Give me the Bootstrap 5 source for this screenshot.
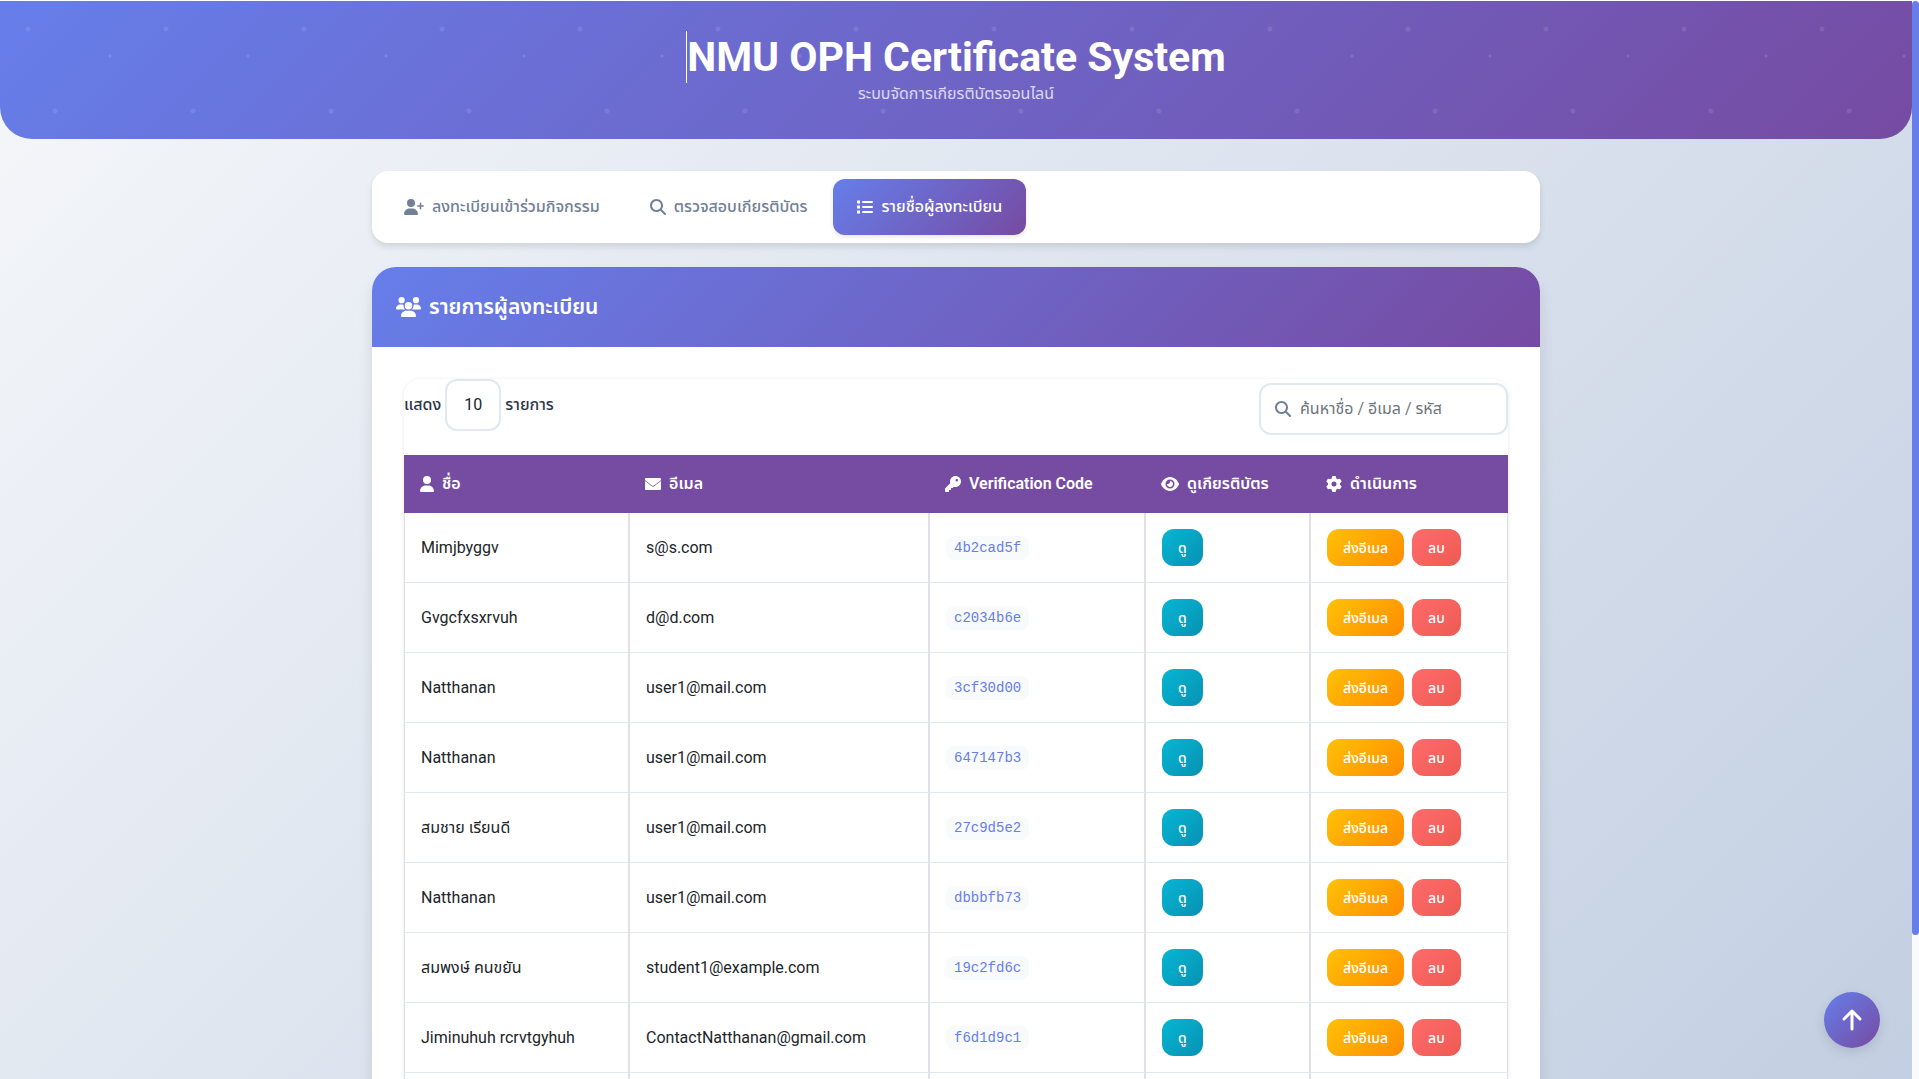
<!DOCTYPE html>
<html lang="th">
<head>
<meta charset="utf-8">
<meta name="viewport" content="width=device-width, initial-scale=1">
<title>NMU OPH Certificate System</title>
<link rel="stylesheet" href="https://cdn.jsdelivr.net/npm/bootstrap@5.3.0/dist/css/bootstrap.min.css">
<style>
:root{--brand-a:#667eea;--brand-b:#764ba2;--line:#e2e8f0;--muted:#718096;--grad:linear-gradient(135deg,var(--brand-a),var(--brand-b))}
html{height:100%;overflow:hidden}
body{height:100%;overflow:hidden;padding:1px 7px 0 0;color:#2d3748;font:16px/24px Roboto,"Noto Sans Thai","Noto Sans",sans-serif;background:#fff}
.page{height:100%;background:linear-gradient(135deg,#f5f7fa,#c3cfe2)}
.hero{height:138px;padding-top:30px;border-radius:0 0 32px 32px;color:#fff;
background:radial-gradient(circle at 28px 28px,#ffffff1a 2px,#fff0 3px) 0 0/138px 138px,
radial-gradient(circle at 110px 55px,#ffffff1f 1px,#fff0 2px) 0 0/138px 138px,
radial-gradient(circle at 55px 110px,#ffffff1a 2px,#fff0 3px) 0 0/138px 138px,var(--grad)}
.hero h1{font-size:41px;line-height:52px;font-weight:700;border-left:1px solid #fff}
.hero p{opacity:.75;line-height:22px}
.shell{max-width:1200px;padding:32px 16px 0}
.tabs{border-radius:16px;padding:8px;gap:2px;box-shadow:0 4px 6px #0000001a}
.tabs a{color:var(--muted);padding:16px 24px;border-radius:12px;font-weight:500;text-decoration:none}
.tabs a.active{color:#fff;background:var(--grad);box-shadow:0 2px 4px #0000001a}
.panel{margin-top:24px;border-radius:24px 24px 0 0;box-shadow:0 10px 15px #0000001a}
.panel-top{background:var(--grad);color:#fff;padding:24px;border-radius:24px 24px 0 0}
.panel-top h2{font-size:21px;line-height:32px;font-weight:600}
.panel-body{padding:32px 32px 0}
.listing{border-radius:16px 16px 0 0;box-shadow:0 1px 4px #0000001a}
.tools{height:76px}
.tools label{font-weight:500}
.tools select{appearance:none;width:56px;height:52px;border:2px solid var(--line);border-radius:12px;background:#fff;text-align:center;color:#212529}
.finder{width:249px;height:52px;margin-top:4px;border:2px solid var(--line);border-radius:12px;padding:0 14px;gap:9px}
.finder input{border:0;outline:0;padding:0;background:none;width:100%;color:#212529}
.finder input::placeholder{color:#6c757d}
.finder svg{color:var(--muted)}
.people{table-layout:fixed;width:100%;border-collapse:separate;border-spacing:0}
.people th{background:var(--brand-b);color:#fff;height:58px;padding:0 16px;font-weight:600}
.people td{height:70px;padding:0 16px;border:1px solid #dee2e6;border-top:0;border-bottom-color:var(--line);color:#212529}
.people code{font:14px/24px "Liberation Mono",monospace;color:var(--brand-a);background:#f8fafc;border-radius:8px;padding:0 8px;display:inline-block}
.act{border:0;border-radius:12px;height:37px;padding:0 16px;color:#fff;font-size:14px;font-weight:500}
.act-view{background:linear-gradient(135deg,#06b6d4,#0891b2)}
.act-mail{background:linear-gradient(135deg,#ffc107,#ff8c00)}
.act-del{background:linear-gradient(135deg,#ff6b6b,#ee5a52)}
.to-top{position:fixed;right:39px;bottom:31px;width:56px;height:56px;border:0;border-radius:50%;background:var(--grad);color:#fff;box-shadow:0 4px 12px #0000001f}
.track{position:fixed;top:0;right:0;bottom:0;width:7px;background:#f8fafc}
.track div{margin-top:1px;height:934px;border-radius:4px;background:var(--brand-a)}
svg{fill:currentColor;flex:none}
</style>
</head>
<body>
<div class="page">
<header class="hero d-flex flex-column align-items-center">
<h1 class="m-0">NMU OPH Certificate System</h1>
<p class="m-0">ระบบจัดการเกียรติบัตรออนไลน์</p>
</header>
<main class="shell container-fluid">
<nav class="tabs bg-white d-flex">
<a href="#" class="d-flex align-items-center gap-2"><svg width="20" height="16" viewBox="0 0 640 512"><path d="M96 128a128 128 0 1 1 256 0A128 128 0 1 1 96 128zM0 482.3C0 383.8 79.8 304 178.3 304h91.4C368.2 304 448 383.8 448 482.3c0 16.4-13.3 29.7-29.7 29.7H29.7C13.3 512 0 498.7 0 482.3zM504 312V248H440c-13.3 0-24-10.7-24-24s10.7-24 24-24h64V136c0-13.3 10.7-24 24-24s24 10.7 24 24v64h64c13.3 0 24 10.7 24 24s-10.7 24-24 24H552v64c0 13.3-10.7 24-24 24s-24-10.7-24-24z"/></svg>ลงทะเบียนเข้าร่วมกิจกรรม</a>
<a href="#" class="d-flex align-items-center gap-2"><svg width="16" height="16" viewBox="0 0 512 512"><path d="M416 208c0 45.9-14.9 88.3-40 122.7L502.6 457.4c12.5 12.5 12.5 32.8 0 45.3s-32.8 12.5-45.3 0L330.7 376c-34.4 25.2-76.8 40-122.7 40C93.1 416 0 322.9 0 208S93.1 0 208 0S416 93.1 416 208zM208 352a144 144 0 1 0 0-288 144 144 0 1 0 0 288z"/></svg>ตรวจสอบเกียรติบัตร</a>
<a href="#" class="active d-flex align-items-center gap-2"><svg width="16" height="16" viewBox="0 0 16 16"><path d="M0 1.5h3v3H0zM0 6.5h3v3H0zM0 11.5h3v3H0z"/><path d="M6 3h9M6 8h9M6 13h9" stroke="currentColor" stroke-width="2" stroke-linecap="round"/></svg>รายชื่อผู้ลงทะเบียน</a>
</nav>
<section class="panel bg-white">
<div class="panel-top"><h2 class="m-0 d-flex align-items-center gap-2"><svg width="25" height="20" viewBox="0 0 640 512"><path d="M144 0a80 80 0 1 1 0 160A80 80 0 1 1 144 0zM512 0a80 80 0 1 1 0 160A80 80 0 1 1 512 0zM0 298.7C0 239.8 47.8 192 106.7 192h42.7c15.9 0 31 3.5 44.6 9.7c-1.3 7.2-1.9 14.7-1.9 22.3c0 38.2 16.8 72.5 43.3 96H21.3C9.6 320 0 310.4 0 298.7zM405.3 320c26.6-23.5 43.3-57.8 43.3-96c0-7.6-.7-15-1.9-22.3c13.6-6.3 28.7-9.7 44.6-9.7h42.7C592.2 192 640 239.8 640 298.7c0 11.8-9.6 21.3-21.3 21.3H405.3zM224 224a96 96 0 1 1 192 0 96 96 0 1 1-192 0zM128 485.3C128 411.7 187.7 352 261.3 352H378.7C452.3 352 512 411.7 512 485.3c0 14.7-11.9 26.7-26.7 26.7H154.7c-14.7 0-26.7-11.9-26.7-26.7z"/></svg>รายการผู้ลงทะเบียน</h2></div>
<div class="panel-body"><div class="listing">
<div class="tools d-flex justify-content-between align-items-start">
<label class="d-flex align-items-center gap-1">แสดง <select><option>10</option></select> รายการ</label>
<label class="finder d-flex align-items-center bg-white"><svg width="16" height="16" viewBox="0 0 512 512"><path d="M416 208c0 45.9-14.9 88.3-40 122.7L502.6 457.4c12.5 12.5 12.5 32.8 0 45.3s-32.8 12.5-45.3 0L330.7 376c-34.4 25.2-76.8 40-122.7 40C93.1 416 0 322.9 0 208S93.1 0 208 0S416 93.1 416 208zM208 352a144 144 0 1 0 0-288 144 144 0 1 0 0 288z"/></svg><input type="search" placeholder="ค้นหาชื่อ / อีเมล / รหัส"></label>
</div>
<table class="people">
<colgroup><col style="width:225px"><col style="width:300px"><col style="width:216px"><col style="width:165px"><col style="width:198px"></colgroup>
<thead><tr>
<th><div class="d-flex align-items-center gap-2"><svg width="14" height="16" viewBox="0 0 448 512"><path d="M224 256A128 128 0 1 0 224 0a128 128 0 1 0 0 256zm-45.7 48C79.8 304 0 383.8 0 482.3C0 498.7 13.3 512 29.7 512H418.3c16.4 0 29.7-13.3 29.7-29.7C448 383.8 368.2 304 269.7 304H178.3z"/></svg>ชื่อ</div></th>
<th><div class="d-flex align-items-center gap-2"><svg width="16" height="16" viewBox="0 0 16 16"><rect y="2" width="16" height="12" rx="1"/><path d="M0 4.5 7 10q1 .7 2 0l7-5.5" fill="none" stroke="#764ba2" stroke-width=".8"/></svg>อีเมล</div></th>
<th><div class="d-flex align-items-center gap-2"><svg width="16" height="16" viewBox="0 0 512 512"><path d="M336 352c97.2 0 176-78.8 176-176S433.2 0 336 0S160 78.8 160 176c0 18.7 2.9 36.8 8.3 53.7L7 391c-4.5 4.5-7 10.6-7 17v80c0 13.3 10.7 24 24 24h80c13.3 0 24-10.7 24-24V448h40c13.3 0 24-10.7 24-24V384h40c6.4 0 12.5-2.5 17-7l33.3-33.3c16.9 5.4 35 8.3 53.7 8.3zM376 96a40 40 0 1 1 0 80 40 40 0 1 1 0-80z"/></svg>Verification Code</div></th>
<th><div class="d-flex align-items-center gap-2"><svg width="18" height="16" viewBox="0 0 576 512"><path d="M288 32c-80.8 0-145.5 36.8-192.6 80.6C48.6 156 17.3 208 2.5 243.7c-3.3 7.9-3.3 16.7 0 24.6C17.3 304 48.6 356 95.4 399.4C142.5 443.2 207.2 480 288 480s145.5-36.8 192.6-80.6c46.8-43.5 78.1-95.4 93-131.1c3.3-7.9 3.3-16.7 0-24.6c-14.9-35.7-46.2-87.7-93-131.1C433.5 68.8 368.8 32 288 32zM144 256a144 144 0 1 1 288 0 144 144 0 1 1-288 0zm144-64c0 35.3-28.7 64-64 64c-7.1 0-13.9-1.2-20.3-3.3c-5.5-1.8-11.9 1.6-11.7 7.4c.3 6.9 1.3 13.8 3.2 20.7c13.7 51.2 66.4 81.6 117.6 67.9s81.6-66.4 67.9-117.6c-11.1-41.5-47.8-69.4-88.6-71.1c-5.8-.2-9.2 6.1-7.4 11.7c2.1 6.4 3.3 13.2 3.3 20.3z"/></svg>ดูเกียรติบัตร</div></th>
<th><div class="d-flex align-items-center gap-2"><svg width="16" height="16" viewBox="0 0 512 512"><path d="M495.9 166.6c3.2 8.7 .5 18.4-6.4 24.6l-43.3 39.4c1.1 8.3 1.7 16.8 1.7 25.4s-.6 17.1-1.7 25.4l43.3 39.4c6.9 6.2 9.6 15.9 6.4 24.6c-4.4 11.9-9.7 23.3-15.8 34.3l-4.7 8.1c-6.6 11-14 21.4-22.1 31.2c-5.9 7.2-15.7 9.6-24.5 6.8l-55.7-17.7c-13.4 10.3-28.2 18.9-44 25.4l-12.5 57.1c-2 9.1-9 16.3-18.2 17.8c-13.8 2.3-28 3.5-42.5 3.5s-28.7-1.2-42.5-3.5c-9.2-1.5-16.2-8.7-18.2-17.8l-12.5-57.1c-15.8-6.5-30.6-15.1-44-25.4L83.1 425.9c-8.8 2.8-18.6 .3-24.5-6.8c-8.1-9.8-15.5-20.2-22.1-31.2l-4.7-8.1c-6.1-11-11.4-22.4-15.8-34.3c-3.2-8.7-.5-18.4 6.4-24.6l43.3-39.4C64.6 273.1 64 264.6 64 256s.6-17.1 1.7-25.4L22.4 191.2c-6.9-6.2-9.6-15.9-6.4-24.6c4.4-11.9 9.7-23.3 15.8-34.3l4.7-8.1c6.6-11 14-21.4 22.1-31.2c5.9-7.2 15.7-9.6 24.5-6.8l55.7 17.7c13.4-10.3 28.2-18.9 44-25.4l12.5-57.1c2-9.1 9-16.3 18.2-17.8C227.3 1.2 241.5 0 256 0s28.7 1.2 42.5 3.5c9.2 1.5 16.2 8.7 18.2 17.8l12.5 57.1c15.8 6.5 30.6 15.1 44 25.4l55.7-17.7c8.8-2.8 18.6-.3 24.5 6.8c8.1 9.8 15.5 20.2 22.1 31.2l4.7 8.1c6.1 11 11.4 22.4 15.8 34.3zM256 336a80 80 0 1 0 0-160 80 80 0 1 0 0 160z"/></svg>ดำเนินการ</div></th>
</tr></thead>
<tbody>
<tr><td>Mimjbyggv</td><td>s@s.com</td><td><code>4b2cad5f</code></td><td><button class="act act-view">ดู</button></td><td><div class="d-flex gap-2"><button class="act act-mail">ส่งอีเมล</button><button class="act act-del">ลบ</button></div></td></tr>
<tr><td>Gvgcfxsxrvuh</td><td>d@d.com</td><td><code>c2034b6e</code></td><td><button class="act act-view">ดู</button></td><td><div class="d-flex gap-2"><button class="act act-mail">ส่งอีเมล</button><button class="act act-del">ลบ</button></div></td></tr>
<tr><td>Natthanan</td><td>user1@mail.com</td><td><code>3cf30d00</code></td><td><button class="act act-view">ดู</button></td><td><div class="d-flex gap-2"><button class="act act-mail">ส่งอีเมล</button><button class="act act-del">ลบ</button></div></td></tr>
<tr><td>Natthanan</td><td>user1@mail.com</td><td><code>647147b3</code></td><td><button class="act act-view">ดู</button></td><td><div class="d-flex gap-2"><button class="act act-mail">ส่งอีเมล</button><button class="act act-del">ลบ</button></div></td></tr>
<tr><td>สมชาย เรียนดี</td><td>user1@mail.com</td><td><code>27c9d5e2</code></td><td><button class="act act-view">ดู</button></td><td><div class="d-flex gap-2"><button class="act act-mail">ส่งอีเมล</button><button class="act act-del">ลบ</button></div></td></tr>
<tr><td>Natthanan</td><td>user1@mail.com</td><td><code>dbbbfb73</code></td><td><button class="act act-view">ดู</button></td><td><div class="d-flex gap-2"><button class="act act-mail">ส่งอีเมล</button><button class="act act-del">ลบ</button></div></td></tr>
<tr><td>สมพงษ์ คนขยัน</td><td>student1@example.com</td><td><code>19c2fd6c</code></td><td><button class="act act-view">ดู</button></td><td><div class="d-flex gap-2"><button class="act act-mail">ส่งอีเมล</button><button class="act act-del">ลบ</button></div></td></tr>
<tr><td>Jiminuhuh rcrvtgyhuh</td><td>ContactNatthanan@gmail.com</td><td><code>f6d1d9c1</code></td><td><button class="act act-view">ดู</button></td><td><div class="d-flex gap-2"><button class="act act-mail">ส่งอีเมล</button><button class="act act-del">ลบ</button></div></td></tr>
<tr><td></td><td></td><td></td><td></td><td></td></tr>
</tbody>
</table>
</div></div>
</section>
</main>
</div>
<button class="to-top d-flex align-items-center justify-content-center" aria-label="กลับขึ้นด้านบน"><svg width="24" height="24" viewBox="0 0 24 24"><path d="M12 21V3M4 11l8-8 8 8" fill="none" stroke="currentColor" stroke-width="3" stroke-linecap="round" stroke-linejoin="round"/></svg></button>
<div class="track"><div></div></div>
<script src="https://cdn.jsdelivr.net/npm/bootstrap@5.3.0/dist/js/bootstrap.bundle.min.js"></script>
</body>
</html>
